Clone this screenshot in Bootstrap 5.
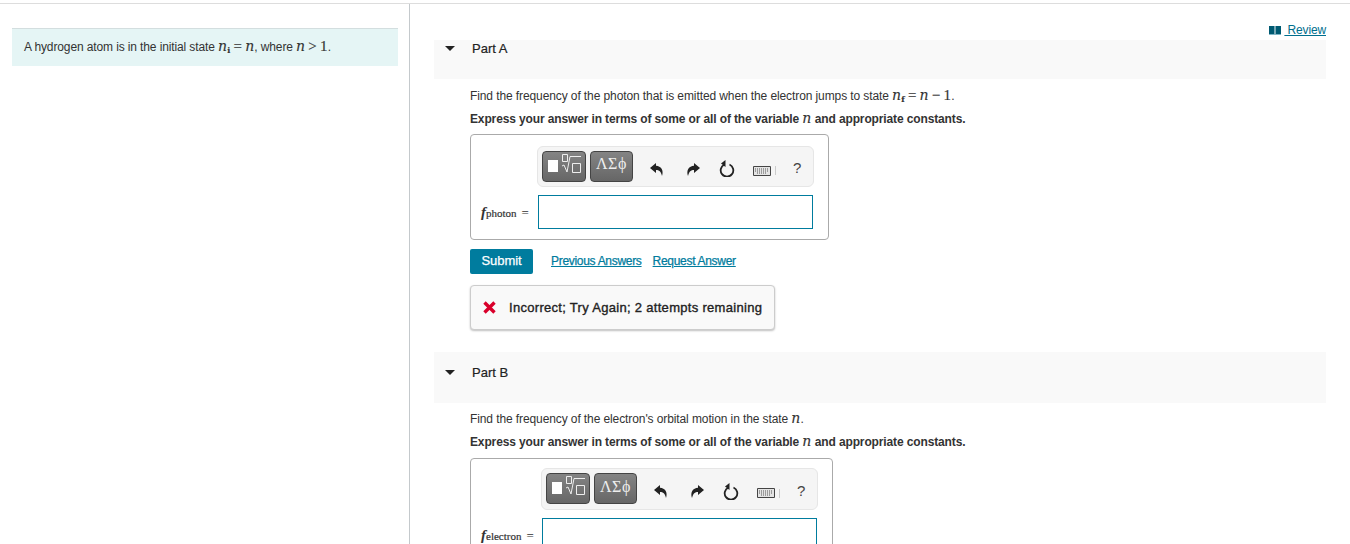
<!DOCTYPE html>
<html lang="en">
<head>
    <meta charset="UTF-8">
    <title>Part A</title>
    <link href="https://cdn.jsdelivr.net/npm/bootstrap@5.3.0/dist/css/bootstrap.min.css" rel="stylesheet">
    <style>
        html, body { height: 544px; overflow: hidden; }
        body { font-family: "Liberation Sans", Arial, sans-serif; font-size: 12px; color: #333; background: #fff; }
        .top-rule { height: 4px; border-bottom: 1px solid #ddd; }
        .left-pane { width: 410px; height: 540px; flex: none; padding: 24px 11px 0 12px; border-right: 1px solid #c4c9cc; }
        .intro-box { height: 38px; padding: 10px 12px 0; background: #e5f5f5; border-top: 1px solid #d3dedf; line-height: 16px; letter-spacing: -.12px; white-space: nowrap; }
        .right-pane { flex: 1; padding-right: 24px; padding-left: 24px; position: relative; }
        .review-link { position: absolute; top: 19px; right: 24px; color: #006f8e; line-height: 14px; white-space: pre; letter-spacing: -.15px; }
        .review-link svg { display: inline-block; vertical-align: -1px; margin-right: 3px; }
        .part-head { background: #f9f9f9; display: flex; font-size: 13px; color: #222; padding-left: 38px; position: relative; -webkit-text-stroke: .2px #222; line-height: 16px; }
        .part-head::before { content: ""; position: absolute; left: 11px; top: 6px; border: 5px solid transparent; border-top: 5px solid #222; border-bottom: 0; }
        .part-a { margin-top: 36px; height: 39px; padding-top: 1px; }
        .part-b { margin-top: 22px; height: 51px; padding-top: 13px; }
        .part-b::before { top: 18px; }
        .part-body { padding-left: 36px; }
        .q-line { line-height: 16px; margin: 0; letter-spacing: -.1px; white-space: nowrap; }
        .q-first { margin-top: 9px; }
        .q-second { margin-top: 7px; font-weight: 700; letter-spacing: -.13px; }
        .part-b + .part-body .q-first { margin-top: 8px; }
        .math { font-family: "DejaVu Serif", "Liberation Serif", serif; font-size: 14px; letter-spacing: .2px; font-weight: 400; line-height: 1; -webkit-text-stroke: .15px #333; }
        .math sub { font-size: 8px; bottom: -.2em; font-weight: 700; }
        .math-op { font-size: 15px; margin: 0 3px; font-family: "Liberation Serif", serif; }
        .math-num { font-size: 15px; font-family: "Liberation Serif", serif; }
        .editor-box { width: 359px; height: 106px; margin-top: 7px; border: 1px solid #aaa; border-radius: 4px; padding: 11px 14px 0 66px; }
        .editor-b { width: 363px; height: 120px; margin-top: 8px; padding-left: 70px; padding-top: 9px; }
        .tool-bar { width: 277px; height: 41px; background: #f5f5f5; border: 1px solid #e6e6e6; border-radius: 6px; display: flex; align-items: center; padding-left: 4px; }
        .editor-b .tool-bar { height: 42px; }
        .tpl-btn { height: 31px; margin-bottom: 1px; background: linear-gradient(#848484, #666); border: 1px solid #444; border-radius: 4px; color: #eee; display: flex; align-items: center; justify-content: center; }
        .tpl-a { width: 44px; }
        .tpl-b { width: 43px; margin-left: 4px; padding-bottom: 4px; font-family: "Liberation Serif", serif; font-size: 16px; letter-spacing: .6px; }
        .tool-icon { display: block; flex: none; margin-top: 4px; }
        .undo-icon { margin-left: 17px; }
        .redo-icon { margin-left: 22px; }
        .redraw-icon { margin-left: 19px; }
        .keys-icon { margin-left: 18px; margin-top: 8px; }
        .help-mark { font-size: 15px; color: #444; margin-left: 17px; margin-top: 4px; }
        .key-sep { width: 1px; height: 9px; background: #ccc; margin-left: 4px; margin-top: 8px; }
        .answer-row { display: flex; align-items: center; margin-top: 8px; margin-left: -66px; }
        .editor-b .answer-row { margin-left: -70px; }
        .answer-label { width: 67px; flex: none; padding-left: 10px; font-family: "Liberation Serif", serif; font-size: 11px; white-space: nowrap; color: #333; -webkit-text-stroke: .2px #333; }
        .answer-label i { font-size: 15px; font-weight: 700; -webkit-text-stroke: 0; }
        .answer-label span { font-size: 13px; margin-left: 5px; -webkit-text-stroke: 0; }
        .answer-input { width: 275px; height: 34px; flex: none; border: 1px solid #007c9e; background: #fff; }
        .editor-b .answer-label { width: 71px; }
        .action-row { margin-top: 9px; display: flex; align-items: center; }
        .submit-btn { width: 63px; height: 25px; padding: 0 0 2px; background: #007c9e; border: 0; border-radius: 2px; color: #fff; font-size: 13px; letter-spacing: -.05px; -webkit-text-stroke: .25px #fff; }
        .action-link { color: #007c9e; font-size: 12px; letter-spacing: -.3px; -webkit-text-stroke: .25px #007c9e; position: relative; top: -1px; }
        .feedback-box { width: 305px; height: 45px; margin-top: 11px; background: #f9f9f9; border: 1px solid #ccc; border-radius: 4px; box-shadow: 0 1px 2px rgba(0,0,0,.25); display: flex; align-items: center; padding-left: 12px; font-size: 13px; font-weight: 400; color: #222; white-space: nowrap; letter-spacing: .3px; -webkit-text-stroke: .35px #222; }
        .feedback-box svg { margin-right: 13px; }
    </style>
</head>
<body>
<div class="top-rule"></div>
<div class="d-flex">
    <div class="left-pane">
        <div class="intro-box">A hydrogen atom is in the initial state <span class="math"><i>n</i><sub>i</sub><span class="math-op">=</span><i>n</i></span>, where <span class="math"><i>n</i><span class="math-op">&gt;</span><span class="math-num">1</span></span>.</div>
    </div>
    <div class="right-pane">
        <a href="#" class="review-link"><svg width="12" height="9" viewBox="0 0 13 9" preserveAspectRatio="none"><path fill="#005a72" d="M0 0h6v8H0zM7 0h6v8H7z"/><path fill="#7fb6c6" d="M0 8h13v1H0z"/></svg> Review</a>

        <div class="part-head part-a">Part A</div>
        <div class="part-body">
            <p class="q-line q-first">Find the frequency of the photon that is emitted when the electron jumps to state <span class="math"><i>n</i><sub>f</sub><span class="math-op">=</span><i>n</i><span class="math-op">−</span><span class="math-num">1</span></span>.</p>
            <p class="q-line q-second">Express your answer in terms of some or all of the variable <span class="math"><i>n</i></span> and appropriate constants.</p>
            <div class="editor-box">
                <div class="tool-bar">
                    <div class="tpl-btn tpl-a">
                        <svg width="42" height="29" viewBox="0 0 42 29" fill="none"><path fill="#fff" d="M5 8h10v12H5z"/><path stroke="#eee" d="M19.500 2.500h5v7h-5zM29.500 11.500h8v9h-8zM19 14l2-1 3 7 3-15.500h11"/></svg>
                    </div>
                    <div class="tpl-btn tpl-b">ΛΣϕ</div>
                    <svg class="tool-icon undo-icon" width="14" height="14" viewBox="0 0 14 14"><path fill="#222" d="M6 1 0 6l6 5V8c3 0 5 1.500 6 6 2-6-1-10-6-10.300z"/></svg>
                    <svg class="tool-icon redo-icon" width="14" height="14" viewBox="0 0 14 14"><path fill="#222" d="M8 1l6 5-6 5V8c-3 0-5 1.500-6 6-2-6 1-10 6-10.300z"/></svg>
                    <svg class="tool-icon redraw-icon" width="16" height="17" viewBox="0 0 16 17" fill="none"><path stroke="#222" stroke-width="1.800" d="M5.500 4.500a6.300 6.300 0 1 0 5 0"/><path fill="#222" d="M6.500 0v7L2 3.500z"/></svg>
                    <svg class="tool-icon keys-icon" width="18" height="10" viewBox="0 0 18 10"><path fill="#e4e4e4" stroke="#444" d="M.5.5h17v9H.5z"/><path stroke="#555" stroke-dasharray="1 1" d="M2 3h14M2 5h14M4 7h10"/></svg>
                    <div class="key-sep"></div>
                    <div class="help-mark">?</div>
                </div>
                <div class="answer-row">
                    <div class="answer-label"><i>f</i>photon<span>=</span></div>
                    <div class="answer-input"></div>
                </div>
            </div>
            <div class="action-row">
                <button type="button" class="btn submit-btn">Submit</button>
                <a href="#" class="action-link" style="margin-left:18px">Previous Answers</a>
                <a href="#" class="action-link" style="margin-left:11px">Request Answer</a>
            </div>
            <div class="feedback-box">
                <svg width="13" height="13" viewBox="0 0 13 13"><path stroke="#d9002b" stroke-width="3.400" d="M1.500 1.500l10 10M11.500 1.500l-10 10"/></svg>
                Incorrect; Try Again; 2 attempts remaining
            </div>
        </div>

        <div class="part-head part-b">Part B</div>
        <div class="part-body">
            <p class="q-line q-first">Find the frequency of the electron's orbital motion in the state <span class="math"><i>n</i></span>.</p>
            <p class="q-line q-second">Express your answer in terms of some or all of the variable <span class="math"><i>n</i></span> and appropriate constants.</p>
            <div class="editor-box editor-b">
                <div class="tool-bar">
                    <div class="tpl-btn tpl-a">
                        <svg width="42" height="29" viewBox="0 0 42 29" fill="none"><path fill="#fff" d="M5 8h10v12H5z"/><path stroke="#eee" d="M19.500 2.500h5v7h-5zM29.500 11.500h8v9h-8zM19 14l2-1 3 7 3-15.500h11"/></svg>
                    </div>
                    <div class="tpl-btn tpl-b">ΛΣϕ</div>
                    <svg class="tool-icon undo-icon" width="14" height="14" viewBox="0 0 14 14"><path fill="#222" d="M6 1 0 6l6 5V8c3 0 5 1.500 6 6 2-6-1-10-6-10.300z"/></svg>
                    <svg class="tool-icon redo-icon" width="14" height="14" viewBox="0 0 14 14"><path fill="#222" d="M8 1l6 5-6 5V8c-3 0-5 1.500-6 6-2-6 1-10 6-10.300z"/></svg>
                    <svg class="tool-icon redraw-icon" width="16" height="17" viewBox="0 0 16 17" fill="none"><path stroke="#222" stroke-width="1.800" d="M5.500 4.500a6.300 6.300 0 1 0 5 0"/><path fill="#222" d="M6.500 0v7L2 3.500z"/></svg>
                    <svg class="tool-icon keys-icon" width="18" height="10" viewBox="0 0 18 10"><path fill="#e4e4e4" stroke="#444" d="M.5.5h17v9H.5z"/><path stroke="#555" stroke-dasharray="1 1" d="M2 3h14M2 5h14M4 7h10"/></svg>
                    <div class="key-sep"></div>
                    <div class="help-mark">?</div>
                </div>
                <div class="answer-row">
                    <div class="answer-label"><i>f</i>electron<span>=</span></div>
                    <div class="answer-input"></div>
                </div>
            </div>
        </div>
    </div>
</div>
<script src="https://cdn.jsdelivr.net/npm/bootstrap@5.3.0/dist/js/bootstrap.bundle.min.js"></script>
</body>
</html>
